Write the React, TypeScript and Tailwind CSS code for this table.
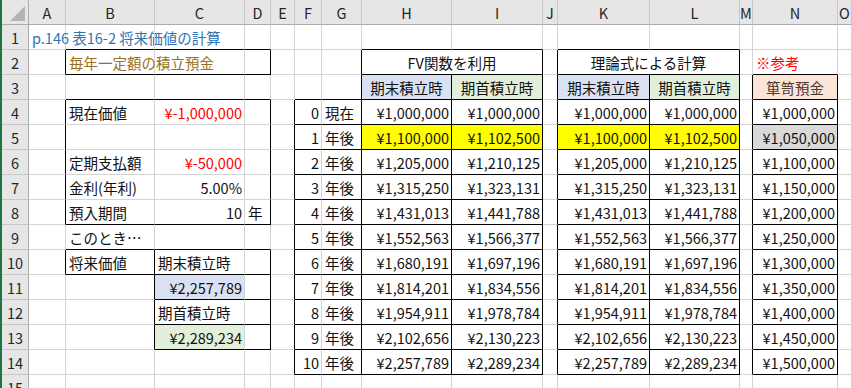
import React from 'react';

type Cell = {
  t?: string;
  align?: 'l' | 'r' | 'c';
  color?: string;
  bg?: string;
  span?: number;
};

const LETTERS = ['A', 'B', 'C', 'D', 'E', 'F', 'G', 'H', 'I', 'J', 'K', 'L', 'M', 'N', 'O'];
const ROWS = 15;
const COLS = 15;

const BLUE = 'bg-[#d9e1f2]';
const GREEN = 'bg-[#e2efda]';
const YELLOW = 'bg-[#ffff00]';
const RED = 'text-[#ff0000]';

const end = ['1,000,000', '1,100,000', '1,205,000', '1,315,250', '1,431,013', '1,552,563', '1,680,191', '1,814,201', '1,954,911', '2,102,656', '2,257,789'];
const begin = ['1,000,000', '1,102,500', '1,210,125', '1,323,131', '1,441,788', '1,566,377', '1,697,196', '1,834,556', '1,978,784', '2,130,223', '2,289,234'];

// sheet[row][col], rows 1..15
const sheet: Cell[][] = Array.from({ length: ROWS + 1 }, () => Array.from({ length: COLS }, () => ({})));

sheet[1][0] = { t: 'p.146 表16-2 将来価値の計算', color: 'text-[#2e75b6]' };
sheet[2][1] = { t: '毎年一定額の積立預金', color: 'text-[#9a7020]' };
sheet[2][7] = { t: 'FV関数を利用', align: 'c', span: 2 };
sheet[2][10] = { t: '理論式による計算', align: 'c', span: 2 };
sheet[2][13] = { t: '※参考', color: RED };
sheet[3][7] = { t: '期末積立時', align: 'c', bg: BLUE };
sheet[3][8] = { t: '期首積立時', align: 'c', bg: GREEN };
sheet[3][10] = { t: '期末積立時', align: 'c', bg: BLUE };
sheet[3][11] = { t: '期首積立時', align: 'c', bg: GREEN };
sheet[3][13] = { t: '箪笥預金', align: 'c', bg: 'bg-[#fce4d6]', color: 'text-[#4a3a34]' };

sheet[4][1] = { t: '現在価値' };
sheet[4][2] = { t: '¥-1,000,000', align: 'r', color: RED };
sheet[6][1] = { t: '定期支払額' };
sheet[6][2] = { t: '¥-50,000', align: 'r', color: RED };
sheet[7][1] = { t: '金利(年利)' };
sheet[7][2] = { t: '5.00%', align: 'r' };
sheet[8][1] = { t: '預入期間' };
sheet[8][2] = { t: '10', align: 'r' };
sheet[8][3] = { t: '年' };
sheet[9][1] = { t: 'このとき…' };
sheet[10][1] = { t: '将来価値' };
sheet[10][2] = { t: '期末積立時' };
sheet[11][2] = { t: '¥2,257,789', align: 'r', bg: BLUE };
sheet[12][2] = { t: '期首積立時' };
sheet[13][2] = { t: '¥2,289,234', align: 'r', bg: GREEN };

for (let n = 0; n <= 10; n++) {
  const r = n + 4;
  const hit = n === 1;
  sheet[r][5] = { t: String(n), align: 'r' };
  sheet[r][6] = { t: n === 0 ? '現在' : '年後' };
  sheet[r][7] = { t: '¥' + end[n], align: 'r', bg: hit ? YELLOW : undefined };
  sheet[r][8] = { t: '¥' + begin[n], align: 'r', bg: hit ? YELLOW : undefined };
  sheet[r][10] = { t: '¥' + end[n], align: 'r', bg: hit ? YELLOW : undefined };
  sheet[r][11] = { t: '¥' + begin[n], align: 'r', bg: hit ? YELLOW : undefined };
  const tansu = (1000000 + 50000 * n).toLocaleString('en-US');
  sheet[r][13] = { t: '¥' + tansu, align: 'r', bg: hit ? 'bg-[#d9d9d9]' : undefined };
}

// black borders: right edge / bottom edge of each cell
const rb = Array.from({ length: ROWS + 1 }, () => Array(COLS).fill(false));
const bb = Array.from({ length: ROWS + 1 }, () => Array(COLS).fill(false));

function box(r1: number, c1: number, r2: number, c2: number, rowsInside = false, vInside: number[] = []) {
  for (let r = r1; r <= r2; r++) {
    rb[r][c2] = true;
    if (c1 > 0) rb[r][c1 - 1] = true;
    vInside.forEach(c => (rb[r][c] = true));
  }
  for (let c = c1; c <= c2; c++) {
    bb[r2][c] = true;
    if (r1 > 1) bb[r1 - 1][c] = true;
    if (rowsInside) for (let r = r1; r < r2; r++) bb[r][c] = true;
  }
}

box(2, 1, 2, 3);
box(4, 1, 8, 3);
box(10, 1, 10, 1);
box(10, 2, 10, 3);
box(11, 2, 11, 3);
box(12, 2, 12, 3);
box(13, 2, 13, 3);
box(2, 7, 2, 8);
box(3, 7, 3, 7);
box(3, 8, 3, 8);
box(2, 10, 2, 11);
box(3, 10, 3, 10);
box(3, 11, 3, 11);
box(3, 13, 3, 13);
box(4, 5, 14, 8, true, [6, 7]);
box(4, 10, 14, 11, true, [10]);
box(4, 13, 14, 13, true);

function SheetCell({ cell, r, c }: { cell: Cell; r: number; c: number }) {
  const last = c + (cell.span ?? 1) - 1;
  const right = rb[r][last] ? 'border-r-black' : 'border-r-[#d4d4d4]';
  const bottom = bb[r][last] ? 'border-b-black' : 'border-b-[#d4d4d4]';
  const justify = cell.align === 'r' ? 'justify-end pr-[2px]' : cell.align === 'c' ? 'justify-center' : 'justify-start pl-[3px]';
  return (
    <div
      className={`flex items-center whitespace-nowrap border-r border-b pt-[2px] ${right} ${bottom} ${justify} ${cell.bg ?? ''} ${cell.color ?? 'text-[#111]'} ${cell.span === 2 ? 'col-span-2' : ''}`}
    >
      {cell.t}
    </div>
  );
}

export default function App() {
  const body: React.ReactNode[] = [];
  for (let r = 1; r <= ROWS; r++) {
    body.push(
      <div key={`h${r}`} className="flex items-center justify-center border-r border-b border-r-[#ababab] border-b-[#c8c8c8] bg-[#e6e6e6] pt-[2px] text-[#262626]">
        {r}
      </div>
    );
    for (let c = 0; c < COLS; c++) {
      const cell = sheet[r][c];
      // skip the column covered by a merged cell
      if (c > 0 && sheet[r][c - 1].span === 2) continue;
      body.push(<SheetCell key={`${r}-${c}`} cell={cell} r={r} c={c} />);
    }
  }

  return (
    <div className="h-[388px] w-[852px] overflow-hidden border-l-2 border-[#217346] bg-white font-['Noto_Sans_CJK_JP',sans-serif] text-[14.5px] leading-none">
      <div className="grid auto-rows-[25px] grid-cols-[27px_37px_89px_90px_26px_24px_27px_40px_90px_91px_15px_92px_90px_13px_85px_1fr]">
        <div className="relative border-r border-b border-r-[#ababab] border-b-[#ababab] bg-[#e6e6e6]">
          <svg className="absolute right-[3px] bottom-[3px]" width="15" height="15" viewBox="0 0 15 15">
            <polygon points="15,0 15,15 0,15" fill="#b4b4b4" />
          </svg>
        </div>
        {LETTERS.map(l => (
          <div key={l} className="flex items-center justify-center border-r border-b border-r-[#c8c8c8] border-b-[#ababab] bg-[#e6e6e6] pt-[2px] text-[#262626]">
            {l}
          </div>
        ))}
        {body}
      </div>
    </div>
  );
}
